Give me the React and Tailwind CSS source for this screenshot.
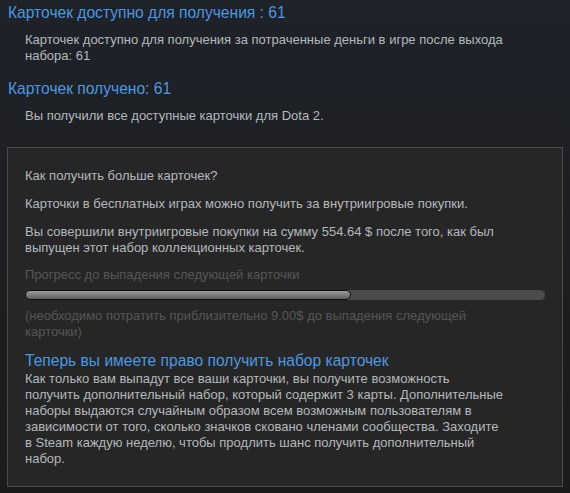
const body = "text-[13px] leading-[16px] text-[#b4b9bd]";
const heading = "text-[15.6px] leading-[20px] text-[#4c98e0]";
const dim = "text-[13px] leading-[16px] text-[#565656]";

function ProgressBar({ value }) {
  return (
    <div className="h-[10px] w-full rounded-full bg-[#4b4b4d]">
      <div
        className="h-full rounded-full border border-[#0c0c0c] bg-gradient-to-b from-[#9a9a9a] via-[#7c7c7c] to-[#5e5e5e]"
        style={{ width: `${value}%` }}
      />
    </div>
  );
}

export default function App() {
  return (
    <div
      className="min-h-[493px] w-[570px] bg-gradient-to-b from-[#1e2229] via-[#1d1e21] to-[#1b1b1b] pb-[6px]"
      style={{ fontFamily: '"Liberation Sans", Arial, sans-serif' }}
    >
      <div className="px-[8px] pt-[3px]">
        <h2 className={heading}>Карточек доступно для получения : 61</h2>
        <p className={`${body} mt-[9px] pl-[17px] pr-[20px]`}>
          Карточек доступно для получения за потраченные деньги в игре после выхода набора: 61
        </p>

        <h2 className={`${heading} mt-[15px]`}>Карточек получено: 61</h2>
        <p className={`${body} mt-[9px] pl-[17px]`}>
          Вы получили все доступные карточки для Dota 2.
        </p>
      </div>

      <div className="mx-[7px] mt-[23px] border border-[#4a4a4a] bg-[#262626] px-[17px] pt-[20px] pb-[19px]">
        <p className={body}>Как получить больше карточек?</p>
        <p className={`${body} mt-[12px]`}>
          Карточки в бесплатных играх можно получить за внутриигровые покупки.
        </p>
        <p className={`${body} mt-[12px] pr-[20px]`}>
          Вы совершили внутриигровые покупки на сумму 554.64 $ после того, как был выпущен этот набор коллекционных карточек.
        </p>

        <p className={`${dim} mt-[11px]`}>Прогресс до выпадения следующей карточки</p>
        <div className="mt-[7px]">
          <ProgressBar value={62.6} />
        </div>
        <p className={`${dim} mt-[8px] pr-[30px]`}>
          (необходимо потратить приблизительно 9.00$ до выпадения следующей карточки)
        </p>

        <h3 className={`${heading} mt-[11px]`}>Теперь вы имеете право получить набор карточек</h3>
        <p className={`${body} pr-[38px]`}>
          Как только вам выпадут все ваши карточки, вы получите возможность получить дополнительный набор, который содержит 3 карты. Дополнительные наборы выдаются случайным образом всем возможным пользователям в зависимости от того, сколько значков сковано членами сообщества. Заходите в Steam каждую неделю, чтобы продлить шанс получить дополнительный набор.
        </p>
      </div>
    </div>
  );
}
